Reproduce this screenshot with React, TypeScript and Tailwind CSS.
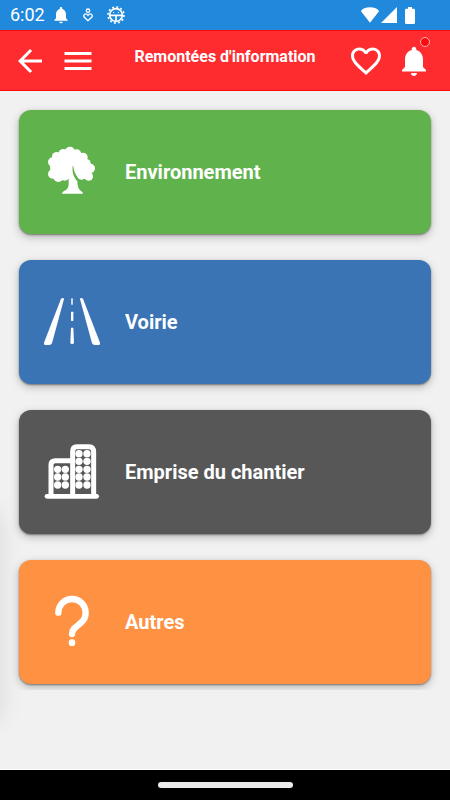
import type { ReactNode } from 'react';
import { MdArrowBack, MdFavoriteBorder, MdMenu, MdNotifications } from 'react-icons/md';

function TreeIcon() {
  return (
    <svg viewBox="0 0 168 168" className="size-14" fill="currentColor" aria-hidden="true">
      <circle cx="78" cy="23" r="15" />
      <circle cx="58" cy="29" r="14" />
      <circle cx="38" cy="38" r="14" />
      <circle cx="26" cy="54" r="14" />
      <circle cx="26" cy="90" r="14" />
      <circle cx="43" cy="99" r="15" />
      <circle cx="62" cy="96" r="14" />
      <circle cx="98" cy="30" r="14" />
      <circle cx="117" cy="40" r="14" />
      <circle cx="127" cy="58" r="13" />
      <circle cx="139" cy="73" r="14" />
      <circle cx="134" cy="97" r="13" />
      <circle cx="113" cy="93" r="14" />
      <path d="M30 45 L60 22 L98 22 L124 42 L140 70 L134 102 L108 106 C98 98 90 86 88 67 L84 67 L82 103 L48 108 L24 94 L18 72 L20 56 Z" />
      <path d="M74 98 V118 C74 132 69 138 60 141 Q54 144 54 149 H117 Q117 144 111 141 C104 137 101 130 100 112 C90 100 84 88 86 67 L78 67 Z" />
    </svg>
  );
}

function RoadIcon() {
  return (
    <svg viewBox="0 0 168 168" className="size-14" fill="currentColor" aria-hidden="true">
      <path d="M51 14 Q58 9 60 15 L24 148 Q21 153 16 153 H4 Q-2 152 0 146 Z" />
      <path d="M117 14 Q110 9 108 15 L144 148 Q147 153 152 153 H164 Q170 152 168 146 Z" />
      <rect x="81" y="13" width="6" height="19" rx="1" opacity=".75" />
      <rect x="81" y="53" width="7" height="28" rx="2" />
      <path d="M81 101 H88 L90 148 Q84 153 79 148 Z" />
    </svg>
  );
}

function BuildingsIcon() {
  const low = [76, 99, 123];
  const tall = [29, 52, 76, 99, 123];

  return (
    <svg viewBox="0 0 168 168" className="size-14" fill="currentColor" aria-hidden="true">
      <g fill="none" stroke="currentColor" strokeLinejoin="round" strokeLinecap="round">
        <path d="M21 150 V62 Q21 50 34 50 H80" strokeWidth="15" />
        <path d="M86 150 V22 Q86 8 99 8 H135 Q149 8 149 24 V150" strokeWidth="15" />
        <path d="M9 157 H158" strokeWidth="14" />
      </g>
      {low.map((y) => (
        <g key={y}>
          <circle cx="41" cy={y} r="11" />
          <circle cx="64" cy={y} r="11" />
        </g>
      ))}
      {tall.map((y) => (
        <g key={y}>
          <circle cx="105" cy={y} r="11" />
          <circle cx="129" cy={y} r="11" />
        </g>
      ))}
    </svg>
  );
}

function QuestionIcon() {
  return (
    <svg viewBox="0 0 168 168" className="size-14" aria-hidden="true">
      <path
        d="M43 56 A41 41 0 0 1 125 56 C125 94 84 92 84 120"
        fill="none"
        stroke="currentColor"
        strokeWidth="19"
        strokeLinecap="round"
      />
      <circle cx="84" cy="146" r="10" fill="currentColor" />
    </svg>
  );
}

function StatusBar() {
  return (
    <div className="flex h-[30px] items-center justify-between bg-[#2189dc] pl-2.5 pr-[35px] text-white">
      <div className="flex items-center">
        <span className="text-[18px] leading-none">6:02</span>
        <MdNotifications size={20} className="ml-1.5" />
        <svg viewBox="0 0 30 42" className="ml-3 h-3.5 w-2.5" fill="none" stroke="currentColor" strokeWidth="4">
          <circle cx="15" cy="8" r="5" />
          <path d="M15 38 L4 28 C-1 20 8 13 15 22 C22 13 31 20 26 28 Z" />
        </svg>
        <svg viewBox="0 0 54 54" className="ml-3.5 size-[18px]" fill="none" stroke="currentColor">
          <circle cx="27" cy="27" r="19" strokeWidth="5" />
          <circle cx="27" cy="27" r="24" strokeWidth="5" strokeDasharray="6 6.57" />
          <path d="M9 28 H45 M27 28 V45" strokeWidth="5" />
          <path d="M20 18 V21 M34 18 V21" strokeWidth="3" />
        </svg>
      </div>
      <div className="flex items-center gap-0.5">
        <svg viewBox="0 0 54 46" className="h-4 w-[18px]" fill="currentColor">
          <path d="M27 46 L0 12 Q2 6 10 3 Q27 -3 44 3 Q52 6 54 12 Z" />
        </svg>
        <svg viewBox="0 0 48 48" className="size-4" fill="currentColor">
          <path d="M48 0 V48 H0 Z" />
        </svg>
        <svg viewBox="0 0 30 51" className="ml-1.5 h-[17px] w-2.5" fill="currentColor">
          <path d="M9 0 H21 V5 H26 Q30 5 30 9 V47 Q30 51 26 51 H4 Q0 51 0 47 V9 Q0 5 4 5 H9 Z" />
        </svg>
      </div>
    </div>
  );
}

function Header() {
  return (
    <header className="grid h-[61px] grid-cols-[1fr_auto_1fr] items-center border-y border-[#ff0a0a] bg-[#fe2b2f] px-3 text-white">
      <div className="flex gap-3">
        <button type="button" aria-label="Retour">
          <MdArrowBack size={36} />
        </button>
        <button type="button" aria-label="Menu">
          <MdMenu size={36} />
        </button>
      </div>
      <h1 className="pb-2 text-[16px] font-bold leading-5">Remontées d'information</h1>
      <div className="flex justify-end gap-3 pr-1.5">
        <button type="button" aria-label="Favoris">
          <MdFavoriteBorder size={36} />
        </button>
        <button type="button" aria-label="Notifications" className="relative">
          <MdNotifications size={36} />
          <span className="absolute -top-1.5 right-0.5 size-2.5 rounded-full border border-[#ffb0b0] bg-[#fb0c10]"></span>
        </button>
      </div>
    </header>
  );
}

interface CardProps {
  label: string;
  color: string;
  icon: ReactNode;
}

function CategoryCard({ label, color, icon }: CardProps) {
  return (
    <button
      type="button"
      className={`flex h-[124px] w-full items-center gap-[25px] rounded-xl px-[25px] text-left text-white shadow-[0_1px_2px_rgba(0,0,0,0.4),0_3px_8px_rgba(0,0,0,0.25)] ${color}`}
    >
      {icon}
      <span className="text-[20px] font-bold leading-6">{label}</span>
    </button>
  );
}

const categories: CardProps[] = [
  { label: 'Environnement', color: 'bg-[#60b24c]', icon: <TreeIcon /> },
  { label: 'Voirie', color: 'bg-[#3a74b4]', icon: <RoadIcon /> },
  { label: 'Emprise du chantier', color: 'bg-[#575757]', icon: <BuildingsIcon /> },
  { label: 'Autres', color: 'bg-[#ff9142]', icon: <QuestionIcon /> }
];

export default function App() {
  return (
    <div className="flex min-h-screen flex-col bg-[#f1f1f1] font-['Roboto',sans-serif]">
      <StatusBar />
      <Header />

      <main className="relative flex-1 overflow-hidden border-b border-white">
        {/* Categories */}
        <div className="flex flex-col gap-[26px] overflow-hidden px-[19px] pb-1.5 pt-[19px]">
          {categories.map((category) => (
            <CategoryCard key={category.label} {...category} />
          ))}
        </div>

        {/* Shadow of the closed drawer */}
        <div className="absolute bottom-12 right-full h-52 w-10 shadow-[0_0_24px_rgba(0,0,0,0.1)]"></div>
      </main>

      {/* Gesture bar */}
      <div className="flex h-[30px] items-center justify-center bg-black">
        <div className="h-1.5 w-[30%] rounded-full bg-[#ebebeb]"></div>
      </div>
    </div>
  );
}
